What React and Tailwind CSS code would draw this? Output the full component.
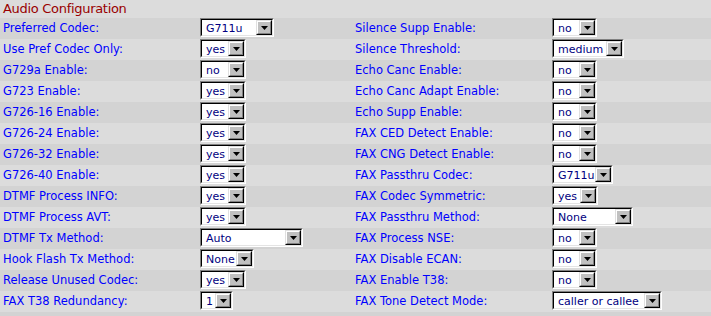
const rows = [
  ['Preferred Codec:', 'G711u', 74, 'Silence Supp Enable:', 'no', 45],
  ['Use Pref Codec Only:', 'yes', 46, 'Silence Threshold:', 'medium', 72],
  ['G729a Enable:', 'no', 46, 'Echo Canc Enable:', 'no', 45],
  ['G723 Enable:', 'yes', 46, 'Echo Canc Adapt Enable:', 'no', 45],
  ['G726-16 Enable:', 'yes', 46, 'Echo Supp Enable:', 'no', 45],
  ['G726-24 Enable:', 'yes', 46, 'FAX CED Detect Enable:', 'no', 45],
  ['G726-32 Enable:', 'yes', 46, 'FAX CNG Detect Enable:', 'no', 45],
  ['G726-40 Enable:', 'yes', 46, 'FAX Passthru Codec:', 'G711u', 61],
  ['DTMF Process INFO:', 'yes', 46, 'FAX Codec Symmetric:', 'yes', 46],
  ['DTMF Process AVT:', 'yes', 46, 'FAX Passthru Method:', 'None', 81],
  ['DTMF Tx Method:', 'Auto', 103, 'FAX Process NSE:', 'no', 45],
  ['Hook Flash Tx Method:', 'None', 54, 'FAX Disable ECAN:', 'no', 45],
  ['Release Unused Codec:', 'yes', 46, 'FAX Enable T38:', 'no', 45],
  ['FAX T38 Redundancy:', '1', 33, 'FAX Tone Detect Mode:', 'caller or callee', 110],
]

const Select = ({ value, width }) => (
  <div
    className="h-[19px] border border-t-[#808080] border-l-[#808080] border-b-white border-r-white"
    style={{ width }}
  >
    <div className="h-full flex bg-white border border-t-black border-l-black border-b-[#e4e4e4] border-r-[#e4e4e4]">
      <div className="flex-1 pl-[4px] pt-[1px] text-[11px] leading-[15px] text-[#000080] whitespace-nowrap overflow-hidden">
        {value}
      </div>
      <div className="w-[16px] h-full border border-t-[#e0e0e0] border-l-[#e0e0e0] border-b-black border-r-black">
        <div className="h-full flex items-center justify-center bg-[#c0c0c0] border border-t-white border-l-white border-b-[#808080] border-r-[#808080]">
          <svg width="7" height="4" viewBox="0 0 7 4">
            <path d="M0 0h7L3.5 4z" fill="#000" />
          </svg>
        </div>
      </div>
    </div>
  </div>
)

const App = () => {
  return (
    <div className="w-[711px] h-[316px] overflow-hidden bg-[#d3d3d3] font-['DejaVu_Sans',sans-serif]">
      <div className="h-[18px] bg-[#dcdcdc] pl-[3px] text-[13px] leading-[18px] tracking-[-0.3px] text-[#990000]">
        Audio Configuration
      </div>
      {rows.map((r, i) => (
        <div
          key={i}
          className={`h-[21px] grid grid-cols-[200px_152px_200px_1fr] text-[11.5px] leading-[21px] text-[#0000ff] ${i % 2 === 0 ? 'bg-[#d3d3d3]' : 'bg-[#dcdcdc]'}`}
        >
          <div className="pl-[3px] whitespace-nowrap">{r[0]}</div>
          <div><Select value={r[1]} width={r[2]} /></div>
          <div className="pl-[3px] whitespace-nowrap">{r[3]}</div>
          <div><Select value={r[4]} width={r[5]} /></div>
        </div>
      ))}
    </div>
  )
}

export default App
